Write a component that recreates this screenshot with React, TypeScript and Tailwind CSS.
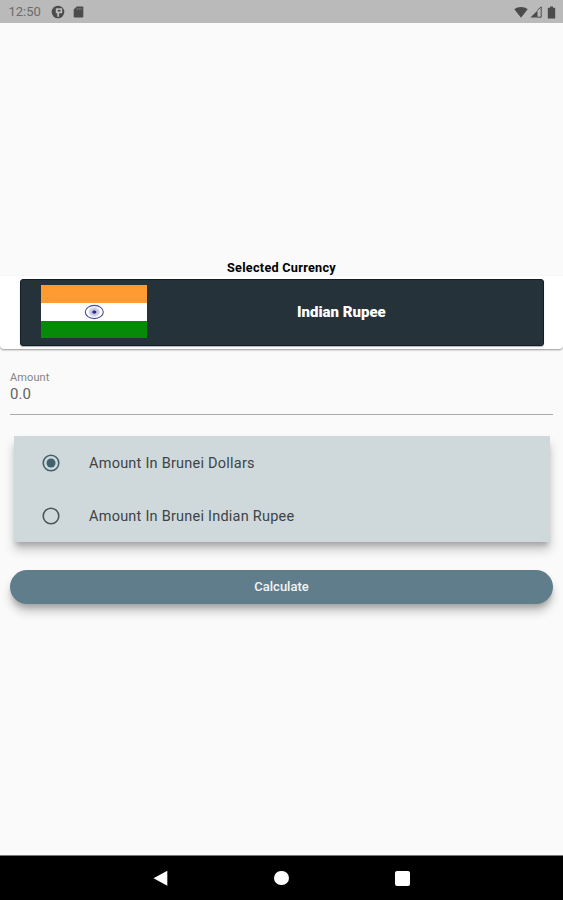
import React, { useState } from "react";

const CURRENCY = "Indian Rupee";

const OPTIONS = [
  { id: "base", label: "Amount In Brunei Dollars" },
  { id: "selected", label: `Amount In Brunei ${CURRENCY}` },
];

const StatusBar: React.FC = () => (
  <div className="flex h-[23px] shrink-0 items-center bg-[#bababa] pl-[8.5px] pr-[7px] text-[#4b4b4b]">
    <span className="w-[42.5px] whitespace-nowrap pt-px text-[13px] leading-[22px] text-[#6c6c6c]">
      12:50
    </span>
    <svg className="mt-px h-3.5 w-3.5" viewBox="0 0 14 14">
      <circle cx="7" cy="7" r="6.3" fill="currentColor" />
      <path d="M4.8 3.2h6.4v5H8.1v3.6H6.2V8.2H4.8z" fill="#bababa" />
      <path d="M6.8 4.9h2.7v1.6H6.8z" fill="currentColor" />
    </svg>
    <svg className="ml-2 mt-px h-3 w-[11px]" viewBox="0 0 11 12">
      <path d="M3.8.5H9.5q.8 0 .8.8v9.4q0 .8-.8.8h-8q-.8 0-.8-.8V3.6z" fill="currentColor" />
      <path d="M4.1 2v2M6.1 2v2M8.1 2v2" stroke="#8a8a8a" strokeWidth=".8" />
    </svg>
    <svg className="ml-auto mt-px h-3 w-3.5" viewBox="0 0 14 12">
      <path d="M7 11.7.3 3.2C4 .1 10 .1 13.7 3.2z" fill="currentColor" />
    </svg>
    <svg className="ml-[2px] mt-px h-3 w-3" viewBox="0 0 12 12">
      <path d="M7.5 4.4V11.6H.4z" fill="currentColor" />
      <path d="M7.3 4.3 11.2.9v10.3H7.3" fill="none" stroke="currentColor" strokeWidth="1" />
    </svg>
    <svg className="ml-[5px] mt-px h-[13px] w-[9px]" viewBox="0 0 9 13">
      <path d="M3 .4h3v1.3h1.3q.9 0 .9.9v9.1q0 .9-.9.9H1.7q-.9 0-.9-.9V2.6q0-.9.9-.9H3z" fill="currentColor" />
    </svg>
  </div>
);

const IndianFlag: React.FC = () => (
  <svg className="-mt-0.5 h-[53px] w-[106px]" viewBox="0 0 106 53" aria-label="India">
    <path d="M0 0h106v18H0z" fill="#ff9b30" />
    <path d="M0 18h106v18H0z" fill="#fff" />
    <path d="M0 36h106v17H0z" fill="#078a07" />
    <g stroke="#4a4aa5" fill="none">
      <ellipse cx="53.3" cy="27" rx="9" ry="6.6" strokeWidth="1.1" />
      <g strokeWidth=".5" opacity=".6">
        {Array.from({ length: 12 }, (_, i) => {
          const a = (i * Math.PI) / 12;
          const dx = Math.cos(a) * 5.6;
          const dy = Math.sin(a) * 4.8;
          return <line key={i} x1={53.3 - dx} y1={27 - dy} x2={53.3 + dx} y2={27 + dy} />;
        })}
      </g>
    </g>
    <ellipse cx="53.3" cy="27" rx="1.9" ry="1.6" fill="#24248c" />
  </svg>
);

const NavBar: React.FC = () => (
  <div className="flex h-[45px] shrink-0 items-center border-t border-[#777] bg-black pl-[153px] pr-[153.5px] text-white">
    <svg className="h-4 w-4" viewBox="0 0 16 16">
      <path d="M14.3.7v15L.5 8.2z" fill="currentColor" />
    </svg>
    <div className="ml-[105.25px] h-[14.5px] w-[14.5px] rounded-full bg-white" />
    <div className="ml-auto h-[15px] w-[15px] rounded-[2px] bg-white" />
  </div>
);

const App: React.FC = () => {
  const [amount, setAmount] = useState("0.0");
  const [selected, setSelected] = useState("base");

  return (
    <div className="flex h-[900px] w-full flex-col overflow-hidden bg-[#fafafa] font-['Roboto',sans-serif]">
      <StatusBar />

      <main className="flex flex-1 flex-col pt-[236px]">
        <h1 className="h-[17px] text-center text-[12.7px] font-bold leading-[17px] tracking-[0.26px] text-black">
          Selected Currency
        </h1>

        <div className="h-[73px] rounded-b-[4px] bg-white pl-5 pr-[19px] pt-[3px] shadow-[0_1px_2px_rgba(0,0,0,0.4)]">
          <div className="flex h-[67px] items-center rounded-[3px] border border-[#101e25] bg-[#253239] pl-5 shadow-[0_1px_1px_rgba(0,0,0,0.3)]">
            <IndianFlag />
            <span className="-mt-px ml-[150px] text-[15px] font-black leading-5 text-white">
              {CURRENCY}
            </span>
          </div>
        </div>

        <label className="mx-2.5 mt-[22px] flex h-[44px] flex-col border-b border-[#a9a9a9]">
          <span className="text-[11px] leading-[14px] tracking-[0.1px] text-[#858585]">Amount</span>
          <input
            value={amount}
            onChange={(e) => setAmount(e.target.value)}
            className="-mt-px h-5 bg-transparent text-[15px] leading-5 text-[#626262] outline-none"
          />
        </label>

        <div className="ml-3.5 mr-[13px] mt-[21px] h-[106px] bg-[#cfd8da] shadow-[0_5px_5px_-2px_rgba(0,0,0,0.2),0_8px_10px_rgba(0,0,0,0.2)]">
          {OPTIONS.map((option) => (
            <button
              key={option.id}
              type="button"
              role="radio"
              aria-checked={selected === option.id}
              onClick={() => setSelected(option.id)}
              className="flex h-[53px] w-full items-center pl-7"
            >
              <svg className="h-[18px] w-[18px]" viewBox="0 0 18 18">
                <circle
                  cx="9"
                  cy="9"
                  r="7.8"
                  fill="none"
                  stroke={selected === option.id ? "#40616d" : "#4d5558"}
                  strokeWidth="1.6"
                />
                {selected === option.id && <circle cx="9" cy="9" r="4.5" fill="#40616d" />}
              </svg>
              <span className="ml-[29px] mt-0.5 text-[14.5px] leading-5 tracking-[0.23px] text-[#3d4446]">
                {option.label}
              </span>
            </button>
          ))}
        </div>

        <button
          type="button"
          className="mx-2.5 mt-7 h-[33.5px] rounded-full bg-[#607d8b] text-[13px] font-medium text-[#f1f5f6] shadow-[0_5px_5px_-2px_rgba(0,0,0,0.2),0_8px_10px_rgba(0,0,0,0.2)]"
        >
          Calculate
        </button>
      </main>

      <NavBar />
    </div>
  );
};

export default App;
